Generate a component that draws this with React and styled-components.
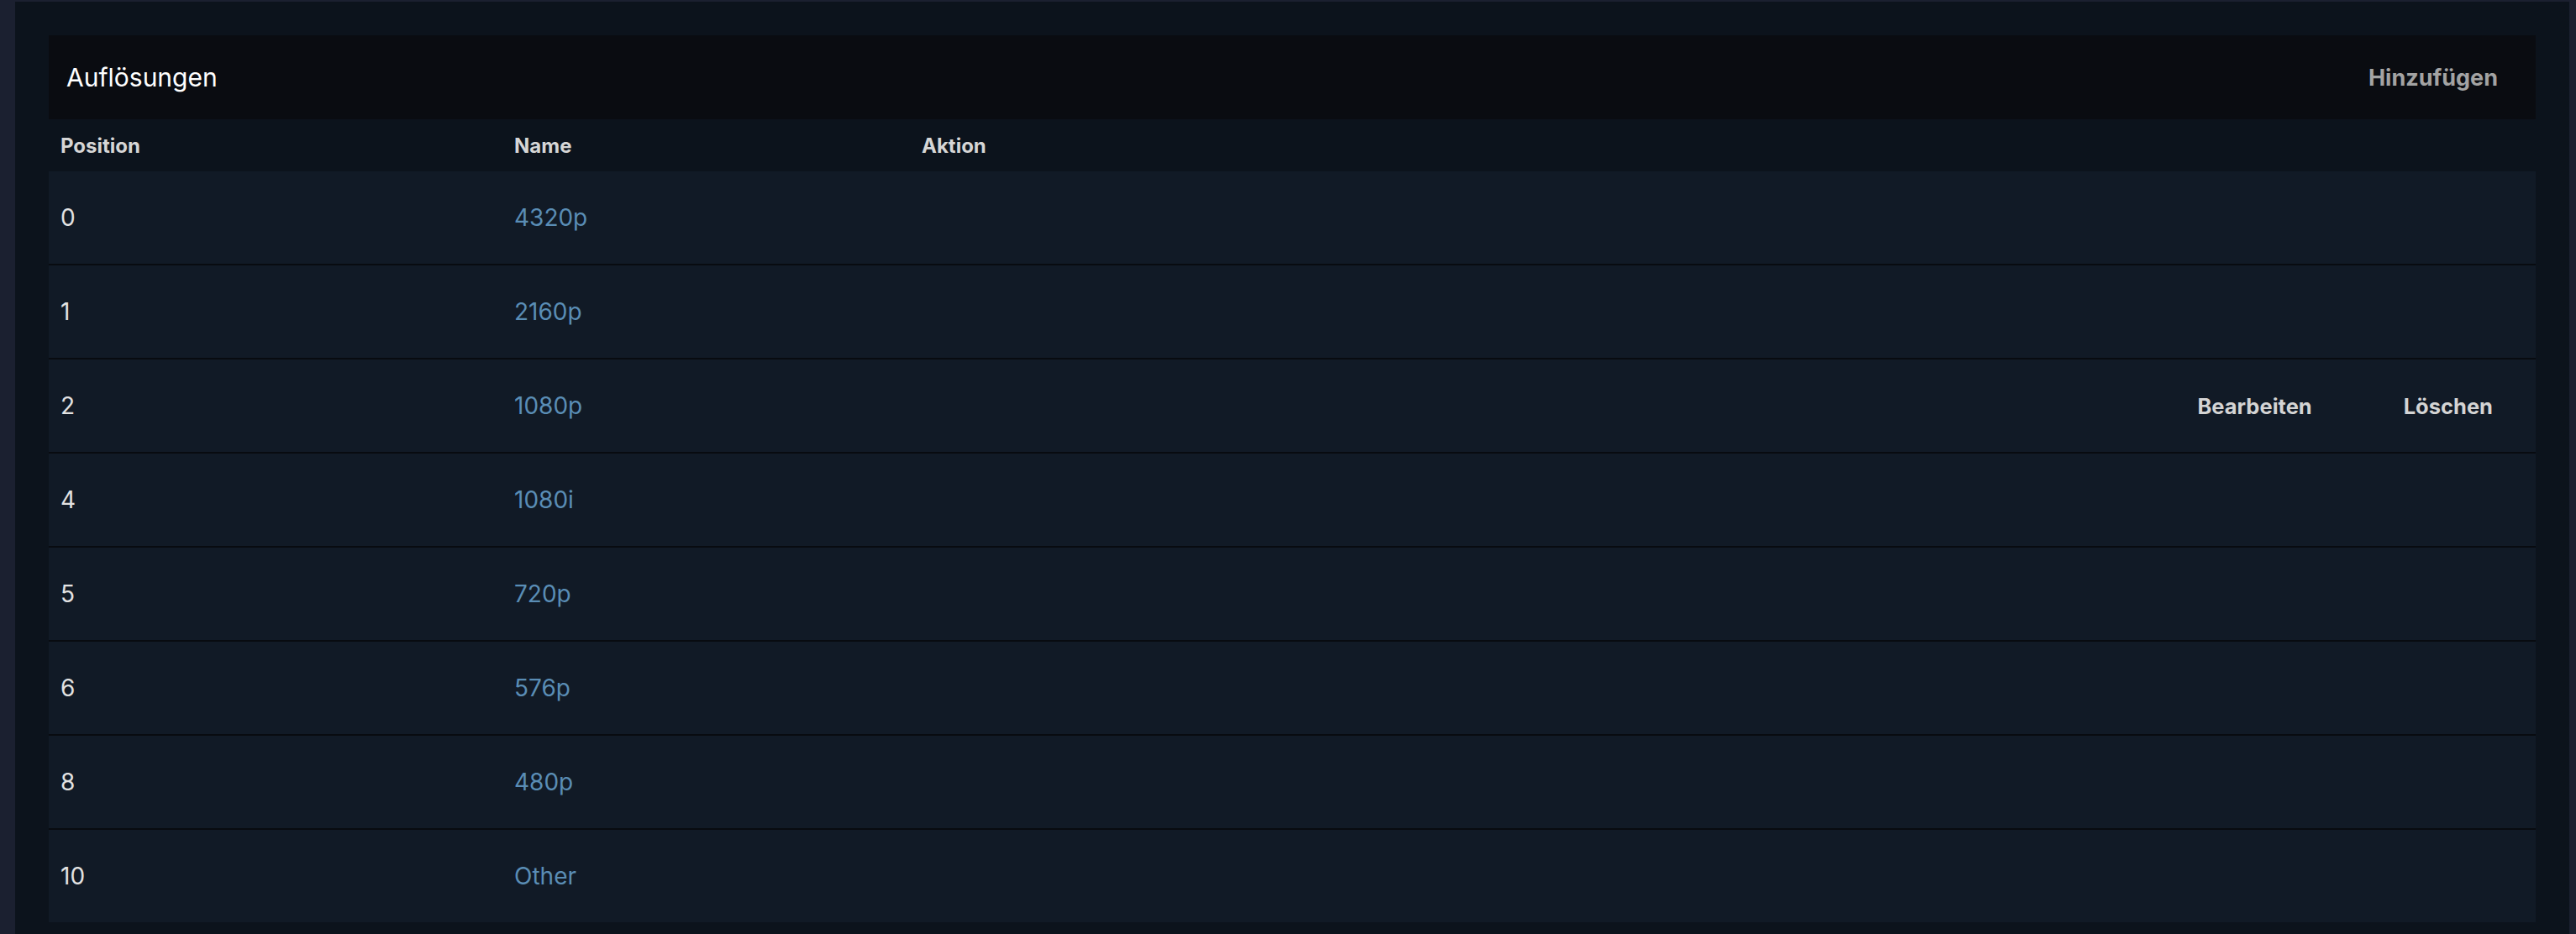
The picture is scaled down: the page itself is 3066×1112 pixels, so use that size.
import React from "react";
import styled, { createGlobalStyle } from "styled-components";

const GlobalStyle = createGlobalStyle`
  html, body {
    margin: 0;
    padding: 0;
    background: #1b2030;
    font-family: Inter, "Noto Sans", "Liberation Sans", sans-serif;
    overflow: hidden;
  }
`;

const Page = styled.div`
  width: 3066px;
  height: 1112px;
  padding: 2px 8px 0 18px;
  box-sizing: border-box;
  overflow: hidden;
`;

const Panel = styled.div`
  background: #0c131c;
  padding: 40px 40px 20px 40px;
  min-height: 1200px;
`;

const Header = styled.div`
  height: 100px;
  background: #0a0c11;
  display: flex;
  align-items: center;
  justify-content: space-between;
  padding: 0 23px 0 21px;
`;

const Title = styled.h2`
  margin: 0;
  font-size: 30px;
  font-weight: 400;
  color: #ffffff;
`;

const AddButton = styled.button`
  background: none;
  border: none;
  padding: 0 22px;
  font-family: inherit;
  font-size: 27px;
  font-weight: 700;
  color: #a3a3a3;
  cursor: pointer;
`;

const Grid = styled.div`
  display: grid;
  grid-template-columns: 540px 485px 1fr;
  align-items: center;
`;

const HeadRow = styled(Grid)`
  height: 62px;
`;

const HeadCell = styled.div`
  padding-left: 14px;
  font-size: 24px;
  font-weight: 700;
  color: #d6d6d6;
`;

const Row = styled(Grid)`
  height: 110px;
  background: #111a26;
  border-top: ${(p) => (p.first ? "none" : "2px solid #080b10")};
`;

const Cell = styled.div`
  padding-left: 14px;
  font-size: 28px;
  color: ${(p) => (p.link ? "#5a8db5" : "#e2e2e2")};
`;

const Actions = styled.div`
  display: flex;
  justify-content: flex-end;
  gap: 7px;
`;

const ActionButton = styled.button`
  background: none;
  border: none;
  padding: 0 51px;
  font-family: inherit;
  font-size: 25.5px;
  font-weight: 700;
  color: #d4d4d4;
  cursor: pointer;
`;

const rows = [
  { pos: 0, name: "4320p" },
  { pos: 1, name: "2160p" },
  { pos: 2, name: "1080p", hover: true },
  { pos: 4, name: "1080i" },
  { pos: 5, name: "720p" },
  { pos: 6, name: "576p" },
  { pos: 8, name: "480p" },
  { pos: 10, name: "Other" },
];

const App = () => {
  return (
    <>
      <GlobalStyle />
      <Page>
        <Panel>
          <Header>
            <Title>Auflösungen</Title>
            <AddButton>Hinzufügen</AddButton>
          </Header>
          <HeadRow>
            <HeadCell>Position</HeadCell>
            <HeadCell>Name</HeadCell>
            <HeadCell>Aktion</HeadCell>
          </HeadRow>
          {rows.map((r, i) => (
            <Row key={r.pos} first={i === 0}>
              <Cell>{r.pos}</Cell>
              <Cell link>{r.name}</Cell>
              <Actions>
                {r.hover && (
                  <>
                    <ActionButton>Bearbeiten</ActionButton>
                    <ActionButton>Löschen</ActionButton>
                  </>
                )}
              </Actions>
            </Row>
          ))}
        </Panel>
      </Page>
    </>
  );
};

export default App;
